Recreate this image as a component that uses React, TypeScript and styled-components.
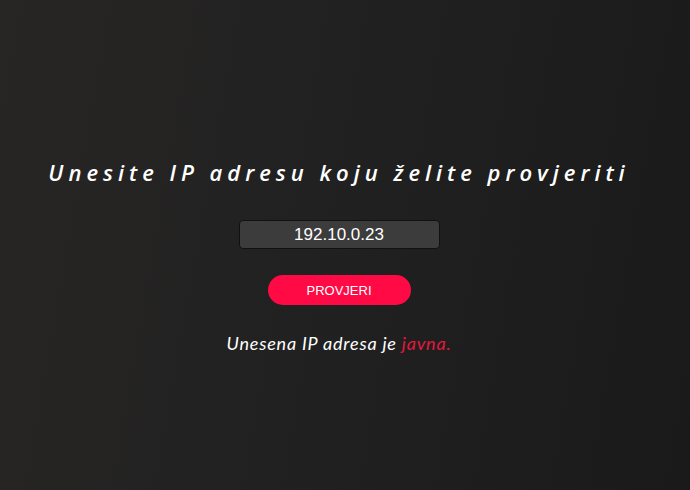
import React from "react";
import styled, { createGlobalStyle } from "styled-components";

const Global = createGlobalStyle`
  html, body { margin: 0; padding: 0; height: 100%; }
  body { background: #1e1e1e; }
  #root { height: 100%; }
`;

const Page = styled.main`
  box-sizing: border-box;
  height: 490px;
  width: 100%;
  background: linear-gradient(100deg, #272625 0%, #222121 45%, #1a1a1a 100%);
  display: flex;
  flex-direction: column;
  align-items: center;
  padding-top: 157px;
  padding-right: 12px;
`;

const Title = styled.h1`
  margin: 0;
  font-family: "Open Sans", sans-serif;
  font-style: italic;
  font-weight: 600;
  font-size: 22px;
  line-height: 30px;
  letter-spacing: 5px;
  color: #ffffff;
`;

const IpInput = styled.input`
  box-sizing: border-box;
  margin-top: 33px;
  width: 201px;
  height: 29px;
  background: #3c3c3c;
  border: 1px solid #111111;
  border-radius: 4px;
  color: #ffffff;
  font-family: "Liberation Sans", Arial, sans-serif;
  font-size: 17px;
  text-align: center;
  outline: none;
  padding: 0;
`;

const CheckButton = styled.button`
  margin-top: 26px;
  width: 143px;
  height: 30px;
  border: none;
  border-radius: 15px;
  background: #ff0a45;
  color: #ffffff;
  font-family: "Liberation Sans", Arial, sans-serif;
  font-size: 13px;
  cursor: pointer;
`;

const Result = styled.p`
  margin: 26px 0 0 0;
  font-family: Lato, sans-serif;
  font-style: italic;
  font-size: 18px;
  line-height: 24px;
  letter-spacing: 0.8px;
  color: #ffffff;
`;

const Highlight = styled.span`
  color: #e3193d;
`;

export default function App() {
  return (
    <>
      <Global />
      <Page>
        <Title>Unesite IP adresu koju želite provjeriti</Title>
        <IpInput defaultValue="192.10.0.23" />
        <CheckButton>PROVJERI</CheckButton>
        <Result>
          Unesena IP adresa je <Highlight>javna.</Highlight>
        </Result>
      </Page>
    </>
  );
}
